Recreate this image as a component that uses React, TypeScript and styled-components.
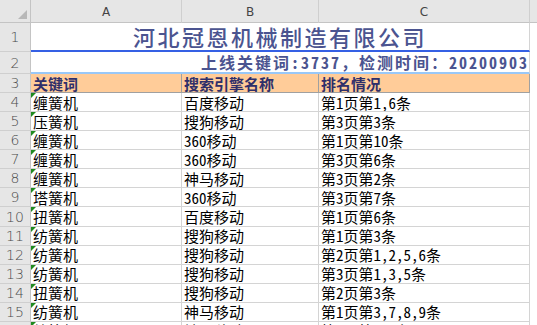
import styled, { createGlobalStyle } from "styled-components";

const GlobalStyle = createGlobalStyle`
  html, body {
    margin: 0;
    padding: 0;
    background: #ffffff;
    overflow: hidden;
  }
`;

const COLS = "31px 151px 137px 211px 1fr";
const CJK = `"Noto Sans CJK SC", "Liberation Sans", sans-serif`;

type RowData = { no: number; word: string; engine: string; rank: string };

const rows: RowData[] = [
  { no: 4, word: "缠簧机", engine: "百度移动", rank: "第1页第1,6条" },
  { no: 5, word: "压簧机", engine: "搜狗移动", rank: "第3页第3条" },
  { no: 6, word: "缠簧机", engine: "360移动", rank: "第1页第10条" },
  { no: 7, word: "缠簧机", engine: "360移动", rank: "第3页第6条" },
  { no: 8, word: "缠簧机", engine: "神马移动", rank: "第3页第2条" },
  { no: 9, word: "塔簧机", engine: "360移动", rank: "第3页第7条" },
  { no: 10, word: "扭簧机", engine: "百度移动", rank: "第1页第6条" },
  { no: 11, word: "纺簧机", engine: "搜狗移动", rank: "第1页第3条" },
  { no: 12, word: "纺簧机", engine: "搜狗移动", rank: "第2页第1,2,5,6条" },
  { no: 13, word: "纺簧机", engine: "搜狗移动", rank: "第3页第1,3,5条" },
  { no: 14, word: "扭簧机", engine: "搜狗移动", rank: "第2页第3条" },
  { no: 15, word: "纺簧机", engine: "神马移动", rank: "第1页第3,7,8,9条" },
  { no: 16, word: "纺簧机", engine: "神马移动", rank: "第1页第2,4条" },
];

const Sheet = styled.div`
  width: 537px;
  height: 325px;
  overflow: hidden;
  background: #fff;
`;

const Row = styled.div<{ $h: number }>`
  display: grid;
  grid-template-columns: ${COLS};
  height: ${(p) => p.$h}px;
  box-sizing: border-box;
`;

const Corner = styled.div`
  position: relative;
  background: #e6e6e6;
  border-right: 1px solid #c4c4c4;
  border-bottom: 1px solid #c4c4c4;
  &::after {
    content: "";
    position: absolute;
    right: 3px;
    bottom: 3px;
    width: 0;
    height: 0;
    border-left: 9px solid transparent;
    border-bottom: 9px solid #b8b8b8;
  }
`;

const ColHead = styled.div<{ $last?: boolean }>`
  background: #e6e6e6;
  border-bottom: 1px solid #c4c4c4;
  border-right: ${(p) => (p.$last ? "none" : "1px solid #cfcfcf")};
  display: flex;
  align-items: center;
  justify-content: center;
  font-family: "DejaVu Sans", sans-serif;
  font-size: 12px;
  color: #444;
  padding-top: 2px;
  box-sizing: border-box;
`;

const RowHead = styled.div`
  background: #e6e6e6;
  border-right: 1px solid #c4c4c4;
  border-bottom: 1px solid #cfcfcf;
  box-sizing: border-box;
  display: flex;
  align-items: center;
  justify-content: center;
  font-family: "DejaVu Sans", sans-serif;
  font-weight: 300;
  font-size: 14px;
  line-height: 1;
  color: #4a4a4a;
`;

const MergedCell = styled.div<{ $line: string }>`
  grid-column: span 3;
  border-bottom: 2px solid ${(p) => p.$line};
  border-right: 1px solid #d4d4d4;
  box-sizing: border-box;
  display: flex;
  font-family: ${CJK};
  font-feature-settings: "hwid";
  line-height: 1;
  white-space: nowrap;
  color: #4b5490;
`;

const TitleCell = styled(MergedCell)`
  align-items: center;
  justify-content: center;
  padding-bottom: 1px;
  font-weight: 500;
  font-size: 22px;
  letter-spacing: 2.5px;
`;

const SubTitleCell = styled(MergedCell)`
  align-items: flex-end;
  justify-content: flex-end;
  padding: 0 0 2px 0;
  font-weight: 700;
  font-size: 16px;
  letter-spacing: 2px;
`;

const FullWidth = styled.span`
  font-feature-settings: normal;
`;

const HeadCell = styled.div`
  background: #ffcc99;
  border-right: 1px solid #a0a0a0;
  border-bottom: 1px solid #a0a0a0;
  box-sizing: border-box;
  display: flex;
  align-items: center;
  padding-left: 2px;
  font-family: ${CJK};
  font-weight: 700;
  font-size: 15px;
  line-height: 1;
  color: #2f2f6a;
`;

const Cell = styled.div<{ $flag?: boolean }>`
  position: relative;
  border-right: 1px solid #d4d4d4;
  border-bottom: 1px solid #d4d4d4;
  box-sizing: border-box;
  display: flex;
  align-items: center;
  padding-left: 2px;
  font-family: ${CJK};
  font-feature-settings: "hwid";
  font-size: 15px;
  line-height: 1;
  color: #000;
  white-space: nowrap;
  overflow: hidden;
  &::before {
    content: "";
    display: ${(p) => (p.$flag ? "block" : "none")};
    position: absolute;
    left: 0;
    top: 0;
    width: 0;
    height: 0;
    border-top: 5px solid #1f8a1f;
    border-right: 5px solid transparent;
  }
`;

const Blank = styled.div`
  background: #fff;
`;

export default function App() {
  return (
    <Sheet>
      <GlobalStyle />
      <Row $h={23}>
        <Corner />
        <ColHead>A</ColHead>
        <ColHead>B</ColHead>
        <ColHead>C</ColHead>
        <ColHead $last />
      </Row>
      <Row $h={29}>
        <RowHead>1</RowHead>
        <TitleCell $line="#3560e4">河北冠恩机械制造有限公司</TitleCell>
        <Blank />
      </Row>
      <Row $h={22}>
        <RowHead>2</RowHead>
        <SubTitleCell $line="#99c8f8">
          上线关键词:3737<FullWidth>，</FullWidth>检测时间<FullWidth>：</FullWidth>20200903
        </SubTitleCell>
        <Blank />
      </Row>
      <Row $h={19}>
        <RowHead>3</RowHead>
        <HeadCell>关键词</HeadCell>
        <HeadCell>搜索引擎名称</HeadCell>
        <HeadCell>排名情况</HeadCell>
        <Blank />
      </Row>
      {rows.map((r) => (
        <Row $h={19.08} key={r.no}>
          <RowHead>{r.no}</RowHead>
          <Cell $flag>{r.word}</Cell>
          <Cell>{r.engine}</Cell>
          <Cell>{r.rank}</Cell>
          <Blank />
        </Row>
      ))}
    </Sheet>
  );
}
